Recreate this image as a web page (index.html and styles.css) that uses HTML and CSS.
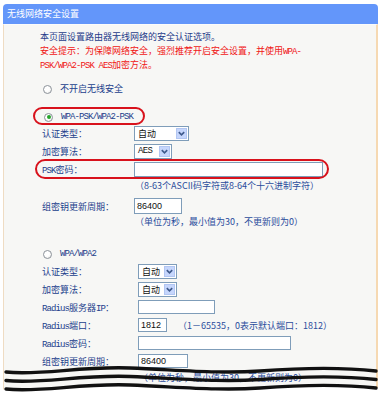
FILE: index.html
```html
<!DOCTYPE html>
<html lang="zh-CN">
<head>
<meta charset="utf-8">
<title>无线网络安全设置</title>
<link rel="stylesheet" href="styles.css">
</head>
<body>
<div class="panel">
  <div class="head">无线网络安全设置</div>
  <div class="body">
    <div class="intro">
      <p class="note">本页面设置路由器无线网络的安全认证选项。</p>
      <p class="warn">安全提示：为保障网络安全，强烈推荐开启安全设置，并使用<span class="mono">WPA-</span></p>
      <p class="warn"><span class="mono">PSK/WPA2-PSK AES</span>加密方法。</p>
    </div>

    <div class="radio-row r1"><span class="radio"></span><span class="rtext">不开启无线安全</span></div>
    <div class="radio-row r2"><span class="radio on"></span><span class="mono rtext">WPA-PSK/WPA2-PSK</span></div>

    <div class="form f1">
      <div class="row"><span class="lbl">认证类型：</span><div class="sel w55"><span class="val">自动</span><i class="btn"><svg viewBox="0 0 10 10" width="9" height="9"><path d="M2 3.5 L5 6.5 L8 3.5" fill="none" stroke="#3f5a8c" stroke-width="1.8"/></svg></i></div></div>
      <div class="row"><span class="lbl">加密算法：</span><div class="sel w38"><span class="val mono">AES</span><i class="btn"><svg viewBox="0 0 10 10" width="9" height="9"><path d="M2 3.5 L5 6.5 L8 3.5" fill="none" stroke="#3f5a8c" stroke-width="1.8"/></svg></i></div></div>
      <div class="row psk"><span class="lbl"><span class="mono">PSK</span>密码：</span><div class="inp w189 h15"></div></div>
      <div class="hint h1">（8-63个ASCII码字符或8-64个十六进制字符）</div>
      <div class="row gk"><span class="lbl">组密钥更新周期：</span><div class="inp w48 h16"><span class="num">86400</span></div></div>
      <div class="hint h2">（单位为秒，最小值为30，不更新则为0）</div>
    </div>

    <div class="radio-row r3"><span class="radio"></span><span class="mono rtext">WPA/WPA2</span></div>

    <div class="form f2">
      <div class="row"><span class="lbl">认证类型：</span><div class="sel w39"><span class="val">自动</span><i class="btn"><svg viewBox="0 0 10 10" width="9" height="9"><path d="M2 3.5 L5 6.5 L8 3.5" fill="none" stroke="#3f5a8c" stroke-width="1.8"/></svg></i></div></div>
      <div class="row"><span class="lbl">加密算法：</span><div class="sel w39"><span class="val">自动</span><i class="btn"><svg viewBox="0 0 10 10" width="9" height="9"><path d="M2 3.5 L5 6.5 L8 3.5" fill="none" stroke="#3f5a8c" stroke-width="1.8"/></svg></i></div></div>
      <div class="row"><span class="lbl"><span class="mono">Radius</span>服务器<span class="mono">IP</span>：</span><div class="inp w77 h14"></div></div>
      <div class="row"><span class="lbl"><span class="mono">Radius</span>端口：</span><div class="field"><div class="inp w29 h14"><span class="num">1812</span></div><span class="hint inline">（1－65535，0表示默认端口：1812）</span></div></div>
      <div class="row"><span class="lbl"><span class="mono">Radius</span>密码：</span><div class="inp w153 h14"></div></div>
      <div class="row"><span class="lbl">组密钥更新周期：</span><div class="inp w50 h14"><span class="num">86400</span></div></div>
      <div class="hint h3">（单位为秒，最小值为30，不更新则为0）</div>
    </div>
  </div>
</div>

<svg class="tear" viewBox="0 0 381 33" width="381" height="33">
  <path d="M4,27.5 C40,31 80,21 130,23 S220,29 260,26 S340,22 378,26 L381,26 L381,33 L0,33 L0,27.5 Z" fill="#ffffff"/>
  <path d="M6,10 C40,14 80,4 130,6 S220,12 260,9 S340,5 376,9" fill="none" stroke="#111" stroke-width="3.4" stroke-linecap="round"/>
  <path d="M6,18.5 C40,22.5 80,12.5 130,14.5 S220,20.5 260,17.5 S340,13.5 376,17.5" fill="none" stroke="#111" stroke-width="3.4" stroke-linecap="round"/>
  <path d="M6,27 C40,31 80,21 130,23 S220,29 260,26 S340,22 376,26" fill="none" stroke="#111" stroke-width="3.4" stroke-linecap="round"/>
</svg>
</body>
</html>
```

FILE: styles.css
```css
html, body {
  margin: 0;
  padding: 0;
  background: #ffffff;
  overflow: hidden;
}
body {
  width: 381px;
  height: 395px;
  position: relative;
  font-family: "Noto Sans CJK SC", "Noto Sans", sans-serif;
  font-size: 9px;
  color: #22408c;
}
.panel {
  margin: 4px 3px 0 3px;
  width: 375px;
}
.head {
  height: 20px;
  line-height: 20px;
  background: #6396fa;
  color: #ffffff;
  border-radius: 4px 4px 0 0;
  padding-left: 4px;
  font-size: 9px;
}
.body {
  background: #f7f7f5;
  border-top: 1px solid #fbfbfb;
  border-left: 1px solid #efdcc3;
  border-right: 2px solid #f6d9b2;
  height: 371px;
  box-sizing: border-box;
}
.intro {
  padding: 5px 0 0 36px;
}
.intro p {
  margin: 0;
  height: 14px;
  line-height: 14px;
  white-space: nowrap;
}
.note { color: #1f3c8a; }
.warn { color: #f01616; }
.mono {
  font-family: "Liberation Mono", "Noto Sans CJK SC", monospace;
  letter-spacing: -0.9px;
}
.radio-row {
  position: relative;
  height: 14px;
  display: flex;
  align-items: center;
  padding-left: 39px;
}
.r1 { margin-top: 10px; }
.r2 { margin-top: 14px; padding-left: 40px; }
.r3 { margin-top: 18px; }
.r2::after {
  content: "";
  position: absolute;
  left: 29px;
  top: -3px;
  width: 112px;
  height: 18px;
  border: 2px solid #d8121c;
  border-radius: 9px;
  box-sizing: border-box;
}
.radio {
  width: 9px;
  height: 9px;
  border: 1px solid #8d939b;
  border-radius: 50%;
  background: radial-gradient(circle at 40% 40%, #ffffff 40%, #e4e4e0 100%);
  box-sizing: border-box;
  display: flex;
  align-items: center;
  justify-content: center;
  margin-right: 8px;
}
.radio.on::before {
  content: "";
  width: 4px;
  height: 4px;
  border-radius: 50%;
  background: #25a52a;
}
.rtext { line-height: 14px; }
.form .row {
  height: 18px;
  display: grid;
  align-items: center;
  padding-left: 38px;
  position: relative;
}
.f1 .row { grid-template-columns: 92px auto; }
.f2 { margin-top: 1px; }
.f2 .row { grid-template-columns: 96px auto; }
.lbl {
  white-space: nowrap;
  color: #22408c;
}
.psk::after {
  content: "";
  position: absolute;
  left: 31px;
  top: -1px;
  width: 294px;
  height: 20px;
  border: 2px solid #d8121c;
  border-radius: 10px;
  box-sizing: border-box;
}
.gk { margin-top: 3px; }
.hint {
  color: #2a4c9c;
  white-space: nowrap;
}
.h1 { height: 16px; line-height: 16px; padding-left: 131px; }
.h2 { height: 14px; line-height: 14px; padding-left: 131px; }
.h3 { height: 16px; line-height: 16px; padding-left: 135px; }
.inline { margin-left: 11px; }
.field {
  display: flex;
  align-items: center;
}
.sel {
  height: 15px;
  box-sizing: border-box;
  border: 1px solid #7f9db9;
  background: #ffffff;
  display: flex;
  align-items: center;
  justify-content: space-between;
  color: #111;
}
.sel .val { padding-left: 3px; line-height: 13px; }
.sel .val.mono { letter-spacing: -0.6px; }
.btn {
  width: 11px;
  height: 11px;
  margin-right: 1px;
  background: #c6d6fc;
  border: 1px solid #b2c6f2;
  box-sizing: border-box;
  display: flex;
  align-items: center;
  justify-content: center;
}
.w55 { width: 55px; }
.w38 { width: 38px; }
.w39 { width: 39px; }
.inp {
  box-sizing: border-box;
  border: 1px solid #7f9db9;
  background: #ffffff;
  display: flex;
  align-items: center;
}
.h14 { height: 14px; }
.h15 { height: 15px; }
.h16 { height: 16px; }
.w189 { width: 189px; }
.w48 { width: 48px; }
.w50 { width: 50px; }
.w77 { width: 77px; }
.w29 { width: 29px; }
.w153 { width: 153px; }
.num {
  font-family: "Liberation Sans", Arial, sans-serif;
  font-size: 9px;
  color: #111;
  padding-left: 2px;
}
.tear {
  position: absolute;
  left: 0;
  top: 362px;
}
```
